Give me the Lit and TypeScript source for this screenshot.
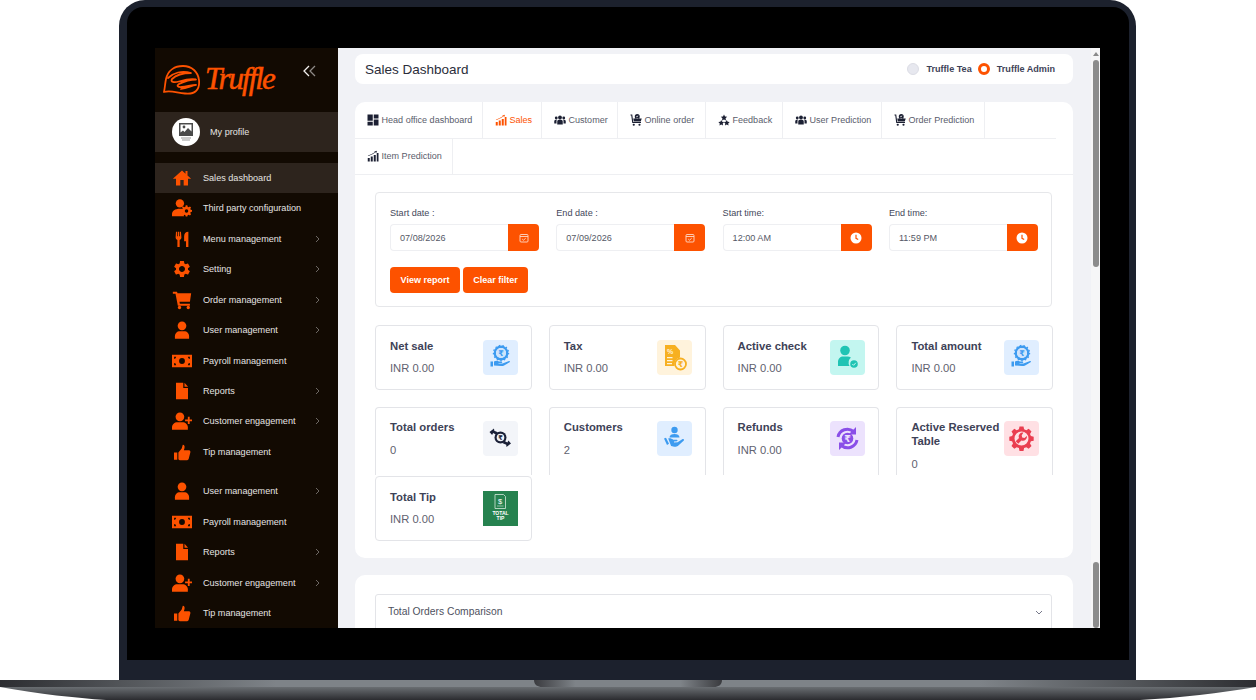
import { LitElement, html, css, svg, unsafeCSS } from "lit";
import { customElement } from "lit/decorators.js";

const ORANGE = "#fd5200";
const OR = unsafeCSS(ORANGE);
const P: Record<string, any> = {
  home: svg`<path d="M10 21v-6.500h4V21h5.200v-8H23L18.600 9V3.600h-2.400v3.200L12 3 1 13h3.800v8z"/>`,
  usercog: svg`<circle cx="9.500" cy="6.500" r="5"/><path d="M0 22v-2.500C0 15.500 3.500 13 9.500 13c1.500 0 2.800.2 4 .5-.9 2.600-.6 5.800 1.200 8.500z"/><path fill-rule="evenodd" d="M19 12.500l1 .1.400 1.700 1.300.6 1.500-.9 1.400 1.400-.9 1.500.5 1.200 1.800.5v2l-1.800.4-.5 1.300.9 1.500-1.400 1.400-1.500-.9-1.300.5-.4 1.700h-2l-.4-1.700-1.300-.5-1.500.9-1.400-1.400.9-1.500-.5-1.300-1.800-.4v-2l1.800-.5.500-1.200-.9-1.500 1.400-1.400 1.500.9 1.300-.6.400-1.700zM19 17.500a2.200 2.200 0 1 0 0 4.400 2.200 2.200 0 0 0 0-4.400z" transform="translate(-1 -3.500) scale(.97)"/>`,
  fork: svg`<g transform="translate(1.800 2) scale(.85)"><path d="M10.500 1.500H9V8H8V1.500H6V8H5V1.500H3.500L3 9.500c0 1.800 1 3 2.500 3.500V23h3.200V13c1.500-.5 2.500-1.700 2.500-3.500zM15 8c0-3.500 2-6.500 6-6.500V23h-3.300v-8H15z"/></g>`,
  gear: svg`<path d="M19.140 12.940c.04-.3.06-.61.06-.94 0-.32-.02-.64-.07-.94l2.030-1.580a.49.49 0 0 0 .12-.61l-1.920-3.320a.488.488 0 0 0-.59-.22l-2.390.96c-.5-.38-1.030-.7-1.620-.94l-.36-2.540a.484.484 0 0 0-.48-.41h-3.840c-.24 0-.43.17-.47.41l-.36 2.540c-.59.24-1.130.57-1.620.94l-2.390-.96c-.22-.08-.47 0-.59.22L2.740 8.870c-.12.21-.08.47.12.61l2.030 1.580c-.05.3-.09.63-.09.94s.02.64.07.94l-2.030 1.580a.49.49 0 0 0-.12.61l1.920 3.320c.12.22.37.29.59.22l2.390-.96c.5.38 1.030.7 1.620.94l.36 2.540c.05.24.24.41.48.41h3.840c.24 0 .44-.17.47-.41l.36-2.540c.59-.24 1.130-.56 1.620-.94l2.390.96c.22.08.47 0 .59-.22l1.920-3.320c.12-.22.07-.47-.12-.61l-2.010-1.580zM12 15.600c-1.980 0-3.600-1.620-3.600-3.600s1.620-3.600 3.600-3.600 3.600 1.620 3.600 3.600-1.620 3.600-3.600 3.600z"/>`,
  cart: svg`<path d="M1 2h5l.6 2H23l-1.500 10H9l.4 2.500H21.500V19H7L4.200 4.500H1z"/><circle cx="9" cy="21" r="2"/><circle cx="19.500" cy="21" r="2"/>`,
  user: svg`<circle cx="12" cy="7" r="5.200"/><path d="M3.500 22.500v-3c0-3.500 2.500-6 6-6h5c3.500 0 6 2.500 6 6v3z"/>`,
  money: svg`<path fill-rule="evenodd" d="M0 4.500h24v15H0zM2.500 7v2.500a2.500 2.500 0 0 0 2.500-2.500zM19 7a2.500 2.500 0 0 0 2.500 2.500V7zM2.500 14.500V17H5a2.500 2.500 0 0 0-2.500-2.500zM21.500 14.500A2.500 2.500 0 0 0 19 17h2.500zM12 8.500a3.500 3.500 0 1 0 0 7 3.500 3.500 0 0 0 0-7z"/>`,
  file: svg`<path d="M4.800 2h8.700v6.500h5.700V22H4.800z"/><path d="M15 2l4.200 5H15z"/>`,
  useradd: svg`<circle cx="9.500" cy="7" r="5.200"/><path d="M0 22.500v-3c0-3.500 3-6 6.500-6h6c3.500 0 6.500 2.500 6.500 6v3z"/><path d="M19 7h2.200v3.200H24.500v2.200h-3.300v3.200H19v-3.200h-3.300v-2.200H19z"/>`,
  thumb: svg`<g transform="translate(1.500 2) scale(.88)"><path d="M1 12h4.500v10H1zM7 12l4.500-5.500L13 1.500c2.500 0 3 2.500 2.200 5L14.500 9H21.500c1.500 0 2.200 1.500 1.800 3l-2.300 9c-.3 1-1 1.500-2 1.500H9c-1.200 0-2-.8-2-2z"/></g>`,
  dash: svg`<path d="M1 1h10.500v12.500H1zM1 15.500h10.500V23H1zM13.500 11H23v12h-9.500zM13.500 1H23v8h-9.500z"/>`,
  chart: svg`<path d="M1.500 16h4v7h-4zM7.500 13h4v10h-4zM13.500 10h4v13h-4zM19.500 6h3.500v17h-3.500z"/><path d="M1.500 11.500l8-3.500 6-3.500-.8-1.500L20 1.500l-1.500 4.500-1-1.400-6.500 4-8 3.500z"/>`,
  users: svg`<circle cx="12" cy="7" r="3.800"/><circle cx="4.500" cy="8" r="2.800"/><circle cx="19.500" cy="8" r="2.800"/><path d="M6.500 21v-6c0-2 1.500-3.500 3.500-3.500h4c2 0 3.500 1.500 3.500 3.500v6zM.5 19v-4.500C.5 13 1.500 11.500 3.500 11.500h2C5 12.500 5 14 5 15v4zM23.500 19v-4.500c0-1.500-1-3-3-3h-2c.5 1 .5 2.500.5 3.500v4z"/>`,
  order: svg`<path d="M1 1h3.500L6.500 16H22v2.200H4.500L2.500 3.200H1z"/><circle cx="7.500" cy="21.500" r="2.200"/><circle cx="19" cy="21.500" r="2.200"/><path fill-rule="evenodd" d="M6.500 9h17L21.500 15h-14zM14.500 0a5 5 0 1 1 0 10 5 5 0 0 1 0-10zm-2.200 5l1.500 1.800 3-3.200-.9-.8-2.100 2.300-.7-.9z"/>`,
  feedback: svg`<path d="M12 1l2 4 4.400.6-3.200 3.100.8 4.300L12 11 8 13l.8-4.300L5.600 5.600 10 5zM6.500 12l1.800 3.700 4 .5-2.900 2.800.7 4-3.600-1.900L2.900 23l.7-4L.7 16.200l4-.5zM17.500 12l1.800 3.700 4 .5-2.900 2.800.7 4-3.600-1.900-3.600 1.900.7-4-2.900-2.800 4-.5z"/>`,
};

const icon = (n: string, s: number, c: string) =>
  html`<svg width=${s} height=${s} viewBox="0 0 24 24" fill=${c} style="flex:none">${P[n]}</svg>`;

const chevron = html`<svg class="chev" width="5" height="8" viewBox="0 0 5 8" fill="none" stroke="#6d6864" stroke-width="1"><path d="M1 1l3 3-3 3"/></svg>`;

const group1 = [
  ["home", "Sales dashboard", 0, 1],
  ["usercog", "Third party configuration", 0],
  ["fork", "Menu management", 1],
  ["gear", "Setting", 1],
  ["cart", "Order management", 1],
  ["user", "User management", 1],
  ["money", "Payroll management", 0],
  ["file", "Reports", 1],
  ["useradd", "Customer engagement", 1],
  ["thumb", "Tip management", 0],
];
const group2 = [
  ["user", "User management", 1],
  ["money", "Payroll management", 0],
  ["file", "Reports", 1],
  ["useradd", "Customer engagement", 1],
  ["thumb", "Tip management", 0],
];
const tabs1 = [
  ["dash", "Head office dashboard", 128],
  ["chart", "Sales", 59],
  ["users", "Customer", 76],
  ["order", "Online order", 88],
  ["feedback", "Feedback", 77],
  ["users", "User Prediction", 99],
  ["order", "Order Prediction", 103],
];

const rupee = (x: number, y: number, s: number, c: string) =>
  svg`<text x=${x} y=${y} font-size=${s} font-weight="700" text-anchor="middle" font-family="DejaVu Sans" fill=${c}>₹</text>`;

const cardIcons: Record<string, any> = {
  rupee: (c: string) => svg`<circle cx="18" cy="13" r="6.200" fill="none" stroke=${c} stroke-width="2.400"/><circle cx="18" cy="13" r="7.600" fill="none" stroke=${c} stroke-width="1.200" stroke-dasharray="1.500 2.200"/><circle cx="18" cy="13" r="5" fill="#cfe4fb"/>${rupee(18, 16, 8, c)}<path fill=${c} d="M7.500 21.500h2.500v5H7.500zM11 21.500c2-1 3.500-.8 5 0h2.500c1 0 1 1.300 0 1.500h-3v.5l4 0 6.500-2.500c1-.3 1.300.7.600 1.200l-5.500 3.300c-1 .5-2 .6-3 .5L11 25.500z"/>`,
  tax: () => svg`<path fill="#f7b021" d="M8 5h10l5 5.500v7a7 7 0 0 0-5.500 8.500H8z"/><text x="10" y="14" font-size="7" font-weight="700" font-family="Liberation Sans" fill="#fff3dc">%</text><path fill="#fff3dc" d="M10 17h5.500v1.200H10zM10 20h5.500v1.200H10zM10 23h5v1.200h-5z"/><circle cx="23.500" cy="24" r="5.500" fill="#fff3dc" stroke="#f7b021" stroke-width="1.800"/>${rupee(23.5, 27, 8, "#f7b021")}`,
  check: () => svg`<circle cx="15" cy="10.500" r="4.800" fill="#20c4b4"/><path fill="#20c4b4" d="M8 26v-4c0-3.500 2.500-5.500 5-5.500h4.500c1.300 0 2.500.4 3.400 1.100A7 7 0 0 0 19.500 26z"/><circle cx="24" cy="24" r="3.800" fill="#20c4b4"/><path d="M22.300 24l1.300 1.300 2.200-2.500" stroke="#c3f6f0" stroke-width="1" fill="none"/>`,
  swap: () => svg`<g fill="#1b2138"><circle cx="17.500" cy="16.500" r="6"/><circle cx="17.500" cy="16.500" r="3.800" fill="#f3f5f9"/>${rupee(17.5, 19, 6.5, "#1b2138")}<path d="M6.500 11l4.500-3.500.3 2.200 3.500 1.500-1.500 2.500-3.200-1.600-1 1.800z"/><path d="M28 22.500l-4.500 3.500-.3-2.200-3.500-1.500 1.500-2.500 3.200 1.600 1-1.800z"/></g>`,
  care: () => svg`<g fill="#3d9bf0"><circle cx="17.500" cy="9" r="3.200"/><path d="M12.500 16.500c0-2.500 2.200-3.500 5-3.500s5 1 5 3.500z"/><path d="M7 17.500l2-.8 3 6-2 1.200z"/><path d="M11.200 17.500c2-.6 3.500.2 5 1.200h3.500c1 0 1.200 1.300.2 1.600l-3 .2.200.9 3.500-.2 5-3.200c1.200-.5 2 .8 1 1.700l-5.500 5c-1.500 1-2.500 1.200-4 1l-3-.7z"/></g>`,
  refund: () => svg`<g fill="none" stroke="#8a4fe8" stroke-width="3"><path d="M8 16a9.500 9.500 0 0 1 15.500-5.500"/><path d="M27 19a9.500 9.500 0 0 1-15.500 5.500"/></g><path fill="#8a4fe8" d="M26 6v7.500h-7.500zM9 29v-7.500h7.500z"/><circle cx="17.500" cy="17.500" r="5.800" fill="#8a4fe8"/>${rupee(17.5, 20.8, 9.5, "#ece2fd")}`,
  wrench: () => svg`<path fill="#ea3e50" fill-rule="evenodd" d="M15.500 5.500h4l.6 2.800 2.200.9 2.400-1.500 2.800 2.800-1.500 2.400.9 2.200 2.800.6v4l-2.800.6-.9 2.200 1.500 2.400-2.800 2.800-2.400-1.500-2.200.9-.6 2.800h-4l-.6-2.800-2.200-.9-2.400 1.500L7.500 24.900 9 22.500 8.100 20.300 5.300 19.700v-4l2.800-.6.9-2.200L7.500 10.500l2.800-2.800 2.400 1.500 2.200-.9zM17.500 10.500a7 7 0 1 0 0 14 7 7 0 0 0 0-14z"/><path fill="#ea3e50" d="M19.500 11.500a4 4 0 0 0-4.500 5.500l-3.300 3.200 2.500 2.500 3.200-3.300a4 4 0 0 0 5.500-4.500l-2.500 2.200-2.200-.7-.5-2.200z"/>`,
  tip: () => svg`<path d="M12 3.500h8.500l2 2V17.500H12z" fill="none" stroke="#d5e8dc" stroke-width=".8"/><text x="17.200" y="12.500" font-size="7.500" text-anchor="middle" font-family="Liberation Sans" fill="#fff">$</text><path d="M14 15h6.500" stroke="#d5e8dc" stroke-width=".6"/><text x="17.500" y="24" font-size="5" font-weight="700" text-anchor="middle" font-family="Liberation Sans" fill="#fff">TOTAL</text><text x="17.500" y="29" font-size="5" font-weight="700" text-anchor="middle" font-family="Liberation Sans" fill="#fff">TIP</text>`,
};

const cards = [
  ["Net sale", "INR 0.00", "rupee", "#e0eeff", "#3d9bf0", ""],
  ["Tax", "INR 0.00", "tax", "#fff3dc", "", ""],
  ["Active check", "INR 0.00", "check", "#c3f6f0", "", ""],
  ["Total amount", "INR 0.00", "rupee", "#e0eeff", "#3d9bf0", ""],
  ["Total orders", "0", "swap", "#f3f5f9", "", "cut"],
  ["Customers", "2", "care", "#e0eeff", "", "cut"],
  ["Refunds", "INR 0.00", "refund", "#ece2fd", "", "cut"],
  ["Active Reserved Table", "0", "wrench", "#ffe0e4", "", "cut"],
  ["Total Tip", "INR 0.00", "tip", "#26824f", "", "last"],
];

const fields = [
  ["Start date :", "07/08/2026", "cal"],
  ["End date :", "07/09/2026", "cal"],
  ["Start time:", "12:00 AM", "clock"],
  ["End time:", "11:59 PM", "clock"],
];

@customElement("app-root")
export class AppRoot extends LitElement {
  static styles = css`
    :host { display: block; width: 1256px; height: 700px; background: #fff; overflow: hidden; font-family: "Liberation Sans", Arial, sans-serif; }
    .lid { width: 1017px; height: 680px; margin-left: 119px; background: #1c212d; border-radius: 26px 26px 0 0; padding: 7px 7px 20px 8px; box-sizing: border-box; }
    .bezel { height: 653px; background: #000; border-radius: 16px 16px 0 0; padding: 41px 29px 32px 28px; box-sizing: border-box; }
    .screen { height: 580px; display: flex; overflow: hidden; background: #f1f2f6; }
    .side { width: 183px; flex: none; background: #120a02; color: #e6e4e2; }
    .brand { height: 64px; display: flex; align-items: center; padding-left: 7px; box-sizing: border-box; }
    .word { font-family: "Liberation Serif", serif; font-style: italic; font-weight: 400; font-size: 31px; line-height: 36px; color: ${OR}; -webkit-text-stroke: .5px ${OR}; letter-spacing: -2px; margin-left: 4px; width: 98px; margin-top: -2px; }
    .collapse { display: block; margin-top: -18px; }
    .profile { height: 40px; background: #2d241d; display: flex; align-items: center; padding-left: 17px; gap: 10px; font-size: 9.100px; margin-bottom: 11px; padding-bottom: 1px; box-sizing: border-box; }
    .avatar { width: 28px; height: 28px; border-radius: 50%; background: #fff; display: flex; align-items: center; justify-content: center; }
    .item { height: 30.450px; display: flex; align-items: center; padding-left: 17px; font-size: 9.100px; padding-bottom: .5px; box-sizing: border-box; }
    .item.on { background: #2d241d; }
    .ic { width: 20px; display: flex; justify-content: center; margin-right: 11px; }
    .chev { margin-left: auto; margin-right: 18px; }
    .spacer { height: 9px; }
    .main { flex: 1; min-width: 0; padding: 6px 18px 0 17px; color: #3e4257; }
    .scroll { width: 9px; flex: none; background: #f6f6f7; display: flex; flex-direction: column; align-items: center; }
    .arrow { width: 0; height: 0; border: 3px solid transparent; border-bottom: 4px solid #8a8a8a; border-top: 0; margin: 4px 0 4px; }
    .thumb { width: 6px; background: #8c8c8c; border-radius: 3px; flex: none; }
    .head { height: 30px; background: #fff; border-radius: 8px; display: flex; align-items: center; padding: 0 18px 0 10px; margin-bottom: 18px; }
    .head h1 { font-size: 13.500px; font-weight: 400; color: #2b2d3a; margin: 0; flex: 1; }
    .radio { width: 12px; height: 12px; border-radius: 50%; background: #e7e8ef; box-sizing: border-box; border: 1px solid #dcdde5; }
    .radio.on { background: #fff; border: 3.500px solid ${OR}; }
    .rl { font-size: 9.100px; font-weight: 700; color: #3e4257; margin-left: 7px; margin-right: 6px; }
    .rl:last-child { margin-right: 0; }
    .panel { background: #fff; border-radius: 10px; margin-bottom: 17px; }
    .row1 { width: 701px; height: 36.500px; display: flex; border-bottom: 1px solid #eeeff2; box-sizing: border-box; }
    .row2 { height: 36.500px; display: flex; border-bottom: 1px solid #eeeff2; box-sizing: border-box; }
    .tab { display: flex; align-items: center; gap: 3px; padding-left: 11.500px; box-sizing: border-box; border-right: 1px solid #eeeff2; font-size: 9.050px; color: #5a5d6c; height: 100%; }
    .tab.on { color: ${OR}; }
    .body { padding: 17px 20px 17px; }
    .filter { border: 1px solid #e6e7ea; border-radius: 4px; padding: 14px 14px 13px; height: 115px; box-sizing: border-box; margin-right: 1px; }
    .fields { display: grid; grid-template-columns: repeat(4, 149px); column-gap: 17.300px; }
    .lab { font-size: 9.100px; line-height: 13px; color: #44475a; margin-bottom: 4px; }
    .inp { display: flex; height: 27px; }
    .val { flex: 1; border: 1px solid #eeeff2; border-right: 0; border-radius: 4px 0 0 4px; font-size: 9.100px; color: #555866; display: flex; align-items: center; padding-left: 9px; }
    .addon { width: 31px; background: ${OR}; border-radius: 0 4px 4px 0; display: flex; align-items: center; justify-content: center; }
    .btns { display: flex; gap: 3px; margin-top: 16px; }
    .btn { height: 26px; background: ${OR}; color: #fff; font-size: 9px; font-weight: 700; border-radius: 4px; display: flex; align-items: center; justify-content: center; }
    .grid { display: grid; grid-template-columns: repeat(4, 156.800px); column-gap: 17px; margin-top: 18px; }
    .card { height: 65px; border: 1px solid #e3e4e8; border-radius: 4px; box-sizing: border-box; padding: 14px 13px 0 14px; display: flex; gap: 4px; margin-bottom: 17px; }
    .card.cut { height: 68px; padding-top: 13px; border-bottom: 0; border-radius: 4px 4px 0 0; margin-bottom: 1px; overflow: hidden; }
    .card.last { margin-bottom: 0; }
    .txt { flex: 1; min-width: 0; margin-top: -1px; }
    .t { font-size: 11.300px; font-weight: 700; line-height: 14px; color: #3e4257; }
    .v { font-size: 11.200px; line-height: 14px; color: #5f6270; margin-top: 8px; }
    .card.cut .v { margin-top: 9px; }
    .square { width: 35px; height: 35px; border-radius: 4px; flex: none; }
    .square.tip { border-radius: 0; }
    .acc { margin: 0 21px 0 20px; height: 100px; border: 1px solid #e3e4e8; border-radius: 3px; padding: 11px 8px 0 12px; display: flex; justify-content: space-between; font-size: 10.300px; color: #4e5160; }
    .panel2 { padding-top: 19px; height: 200px; }
    .base { display: block; }
  `;

  render() {
    const row = (g: any[]) => g.map(([i, t, c, on]) => html`
      <div class="item ${on ? "on" : ""}"><span class="ic">${icon(i, 20, ORANGE)}</span>${t}${c ? chevron : ""}</div>`);
    const tab = (t: any, on = false) => html`
      <div class="tab ${on ? "on" : ""}" style="width:${t[2]}px">${icon(t[0], 12, on ? ORANGE : "#1c2033")}${t[1]}</div>`;
    return html`
      <div class="lid"><div class="bezel"><div class="screen">
        <aside class="side">
          <div class="brand">
            <svg width="39" height="30" viewBox="0 0 39 30" fill="none" stroke=${ORANGE} stroke-width="1.800" stroke-linecap="round" stroke-linejoin="round" style="flex:none">
              <path d="M2 27C3 22 3 19 4 14 6 5 13 1 21 1c9 0 15 6 16 14 .5 5-.5 9-3 11-2 2-6 3-11 2.500C15 28 9 25 2 27z"/>
              <path d="M6 13c5-5 14-8 23-5-7 0-15 2-19 6-2 3 2 4 7 2.500 5-1.500 11-3.500 17-2-6 0-12 2-17 4.500-3 2-1 3.500 3 3 5-.5 10-2 14-2-4 1-9 2.500-15 4"/>
            </svg>
            <span class="word">Truffle</span>
            <svg class="collapse" width="13" height="12" viewBox="0 0 13 12" fill="none" stroke-width="1.300"><path d="M6 1L1 6l5 5" stroke="#f2f0ee"/><path d="M12 1L7 6l5 5" stroke="#8e8a86"/></svg>
          </div>
          <div class="profile">
            <span class="avatar"><svg width="16" height="18" viewBox="0 0 16 18"><path fill="#4a4a4a" d="M1 0h14v13H1z"/><path fill="#fff" d="M2.500 1.500h11v7L10 5 6.500 9 5 7.500l-2.500 2z"/><circle cx="6" cy="4" r="1.400" fill="#4a4a4a"/><path fill="#999" d="M3 14.500h10v1H3zM4 16.500h8v1H4z"/></svg></span>
            My profile
          </div>
          ${row(group1)}
          <div class="spacer"></div>
          ${row(group2)}
        </aside>
        <div class="main">
          <div class="head">
            <h1>Sales Dashboard</h1>
            <span class="radio"></span><span class="rl">Truffle Tea</span>
            <span class="radio on"></span><span class="rl">Truffle Admin</span>
          </div>
          <section class="panel">
            <div class="row1">${tabs1.map((t, i) => tab(t, i === 1))}</div>
            <div class="row2">${tab(["chart", "Item Prediction", 98])}</div>
            <div class="body">
              <div class="filter">
                <div class="fields">
                  ${fields.map(([l, v, k]) => html`<div>
                    <div class="lab">${l}</div>
                    <div class="inp"><div class="val">${v}</div><div class="addon">
                      ${k === "cal"
                        ? html`<svg width="10" height="10" viewBox="0 0 10 10" fill="none" stroke="#ffd9c7" stroke-width=".9"><rect x="1" y="1.500" width="8" height="7.500" rx="1"/><path d="M1 3.500h8M3.200 6l1.300 1.200 2.200-2"/></svg>`
                        : html`<svg width="12" height="12" viewBox="0 0 12 12"><circle cx="6" cy="6" r="5.500" fill="#fff"/><path d="M6 2.800V6.300l2.200 1.200" fill="none" stroke=${ORANGE} stroke-width="1.200"/></svg>`}
                    </div></div>
                  </div>`)}
                </div>
                <div class="btns">
                  <div class="btn" style="width:70px">View report</div>
                  <div class="btn" style="width:65px">Clear filter</div>
                </div>
              </div>
              <div class="grid">
                ${cards.map(([t, v, ic, bg, c, cl]) => html`
                  <div class="card ${cl}">
                    <div class="txt"><div class="t">${t}</div><div class="v">${v}</div></div>
                    <svg class="square ${ic === "tip" ? "tip" : ""}" viewBox="0 0 35 35" style="background:${bg}">${cardIcons[ic](c)}</svg>
                  </div>`)}
              </div>
            </div>
          </section>
          <section class="panel panel2">
            <div class="acc"><span>Total Orders Comparison</span>
              <svg width="8" height="14" viewBox="0 0 8 14" fill="none" stroke="#77798a" stroke-width="1"><path d="M1 5l3 3 3-3"/></svg>
            </div>
          </section>
        </div>
        <div class="scroll">
          <div class="arrow"></div>
          <div class="thumb" style="height:207px"></div>
          <div style="flex:1"></div>
          <div class="thumb" style="height:66px"></div>
        </div>
      </div></div></div>
      <svg class="base" width="1256" height="20" viewBox="0 0 1256 20">
        <defs>
          <linearGradient id="h"><stop offset="0" stop-color="#2c2d31"/><stop offset=".1" stop-color="#53565a"/><stop offset=".22" stop-color="#7e8388"/><stop offset=".78" stop-color="#7e8388"/><stop offset=".9" stop-color="#53565a"/><stop offset="1" stop-color="#2c2d31"/></linearGradient>
          <linearGradient id="v" x1="0" y1="0" x2="0" y2="1"><stop offset="0" stop-color="#6a6e72"/><stop offset="1" stop-color="#2b2c30"/></linearGradient>
          <linearGradient id="n"><stop offset="0" stop-color="#3a3b3f"/><stop offset=".22" stop-color="#7e8388"/><stop offset=".78" stop-color="#7e8388"/><stop offset="1" stop-color="#3a3b3f"/></linearGradient>
        </defs>
        <path d="M0 7C40 14 75 18 106 20H1140C1180 18 1220 13 1256 7z" fill="url(#v)"/>
        <rect y="0" width="1256" height="7" fill="url(#h)"/>
        <path d="M534 0H722C722 5 718 7 714 7H542C538 7 534 5 534 0z" fill="url(#n)"/>
      </svg>
    `;
  }
}
